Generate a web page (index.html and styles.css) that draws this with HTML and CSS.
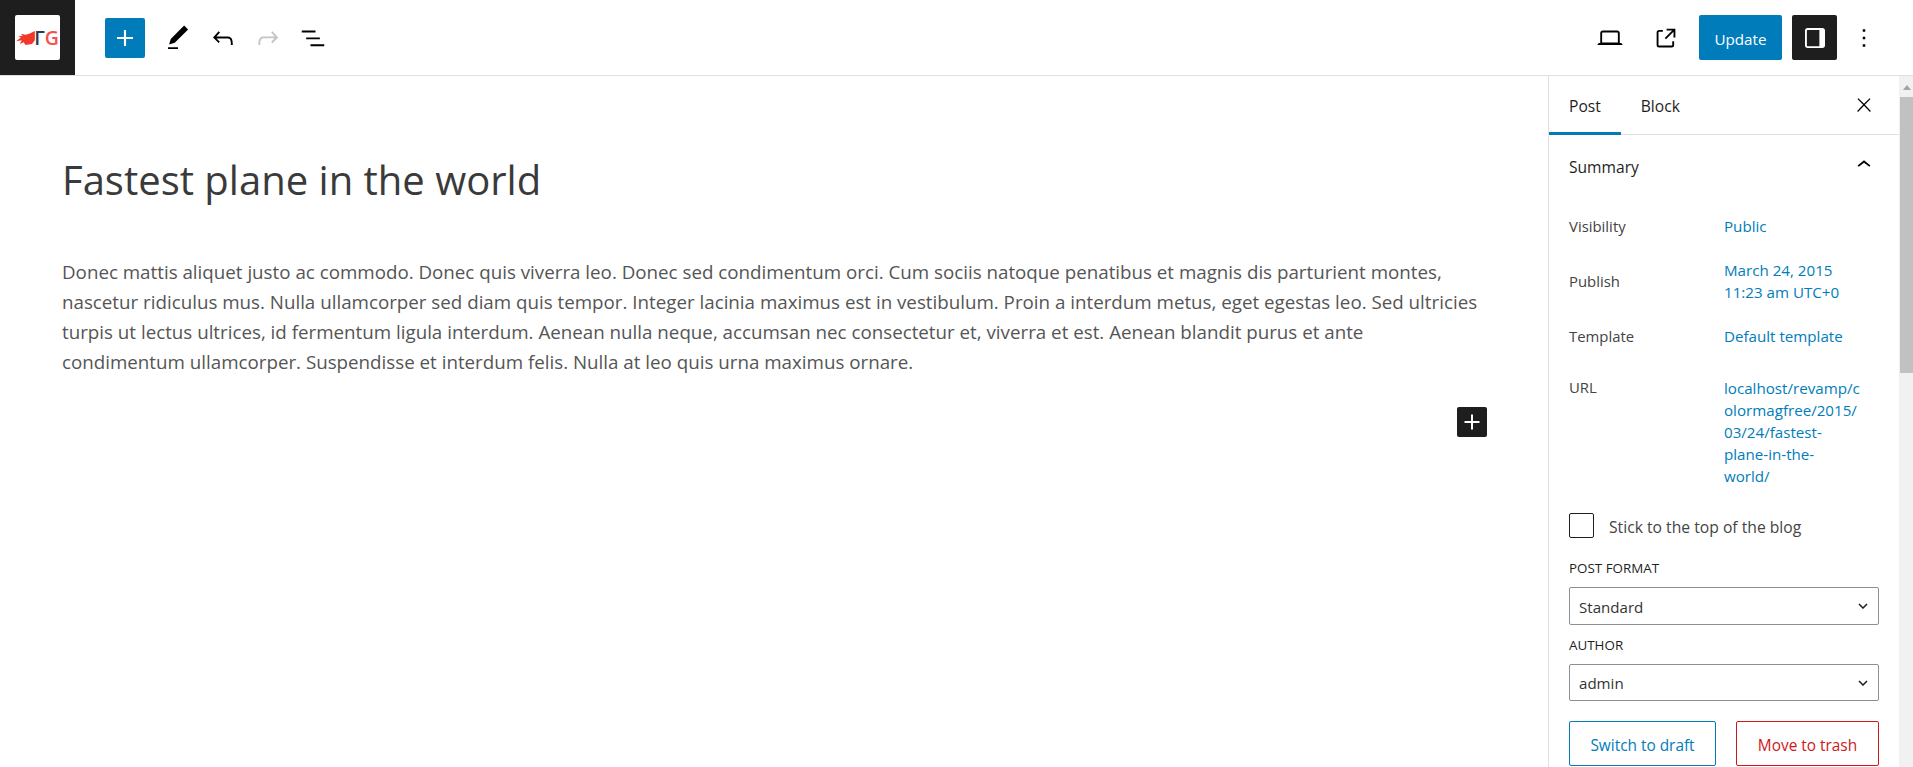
FILE: index.html
```html
<!DOCTYPE html>
<html lang="en">
<head>
    <meta charset="UTF-8">
    <meta name="viewport" content="width=device-width, initial-scale=1.0">
    <title>Edit Post</title>
    <link rel="stylesheet" href="styles.css">
</head>
<body>
    <!-- Top toolbar -->
    <header class="topbar">
        <div class="logo-box">
            <div class="logo">
                <svg class="logo-flame" viewBox="0 0 20 15"><path fill="#f0392b" d="M20 0V10L17 14 10 15 8 12 4 14 6 10 0 11 5 7 2 6 7 5 5 3 10 4 14 3z"/></svg>
                <span class="logo-t">Γ</span><span class="logo-g">G</span>
            </div>
        </div>
        <div class="tools-left">
            <button class="btn-add" type="button"><svg viewBox="0 0 24 24"><path d="M18 11.2h-5.2V6h-1.6v5.2H6v1.6h5.2V18h1.6v-5.2H18z"/></svg></button>
            <span class="tool"><svg viewBox="0 0 24 24"><path d="M20.1 5.1L16.9 2 6.2 12.7l-1.3 4.4 4.5-1.3L20.1 5.1zM4 20.8h8v-1.5H4v1.5z"/></svg></span>
            <span class="tool"><svg viewBox="0 0 24 24"><path d="M18.3 11.7c-.6-.6-1.4-.9-2.3-.9H6.7l2.9-3.3-1.1-1-4.5 5L8.5 16l1-1-2.7-2.7H16c.5 0 .9.2 1.3.5 1 1 1 3.4 1 4.5v.3h1.5v-.2c0-1.5 0-4.3-1.5-5.7z"/></svg></span>
            <span class="tool disabled"><svg viewBox="0 0 24 24"><path d="M15.6 6.5l-1.1 1 2.9 3.3H8c-.9 0-1.7.3-2.3.9-1.4 1.5-1.4 4.2-1.4 5.6v.2h1.5v-.3c0-1.1 0-3.5 1-4.5.3-.3.7-.5 1.3-.5h9.2L14.5 15l1.1 1.1 4.6-4.6-4.6-5z"/></svg></span>
            <span class="tool"><svg viewBox="0 0 24 24"><path d="M3 6h11v1.5H3V6zm3.5 5.5h11V13h-11v-1.5zM21 17H10v1.5h11V17z"/></svg></span>
        </div>
        <div class="tools-right">
            <span class="tool"><svg viewBox="0 0 24 24"><path d="M20.5 16h-.7V8c0-1.1-.9-2-2-2H6.2c-1.1 0-2 .9-2 2v8h-.7c-.8 0-1.5.7-1.5 1.5h20c0-.8-.7-1.5-1.5-1.5zM5.7 8c0-.3.2-.5.5-.5h11.6c.3 0 .5.2.5.5v7.6H5.7V8z"/></svg></span>
            <span class="tool"><svg viewBox="0 0 24 24"><path d="M19.5 4.5h-7V6h4.44l-5.97 5.97 1.06 1.06L18 7.06v4.44h1.5v-7Zm-13 1a2 2 0 0 0-2 2v10a2 2 0 0 0 2 2h10a2 2 0 0 0 2-2v-3H17v3a.5.5 0 0 1-.5.5h-10a.5.5 0 0 1-.5-.5v-10a.5.5 0 0 1 .5-.5h3V5.5h-3Z"/></svg></span>
            <button class="btn-update" type="button">Update</button>
            <button class="btn-panel" type="button"><svg viewBox="0 0 24 24"><path d="M18 4H6c-1.1 0-2 .9-2 2v12c0 1.1.9 2 2 2h12c1.1 0 2-.9 2-2V6c0-1.1-.9-2-2-2zM6 18.5c-.3 0-.5-.2-.5-.5V6c0-.3.2-.5.5-.5h9.5v13H6z"/></svg></button>
            <span class="tool more"><svg viewBox="0 0 24 24"><path d="M13 19h-2v-2h2v2zm0-6h-2v-2h2v2zm0-6h-2V5h2v2z"/></svg></span>
        </div>
    </header>

    <div class="workspace">
        <!-- Post content -->
        <main class="editor">
            <h1 class="post-title">Fastest plane in the world</h1>
            <p class="post-body">Donec mattis aliquet justo ac commodo. Donec quis viverra leo. Donec sed condimentum orci. Cum sociis natoque penatibus et magnis dis parturient montes, nascetur ridiculus mus. Nulla ullamcorper sed diam quis tempor. Integer lacinia maximus est in vestibulum. Proin a interdum metus, eget egestas leo. Sed ultricies turpis ut lectus ultrices, id fermentum ligula interdum. Aenean nulla neque, accumsan nec consectetur et, viverra et est. Aenean blandit purus et ante condimentum ullamcorper. Suspendisse et interdum felis. Nulla at leo quis urna maximus ornare.</p>
            <div class="appender-row">
                <button class="btn-appender" type="button"><svg viewBox="0 0 24 24"><path d="M18 11.2h-5.2V6h-1.6v5.2H6v1.6h5.2V18h1.6v-5.2H18z"/></svg></button>
            </div>
        </main>

        <!-- Settings sidebar -->
        <aside class="sidebar">
            <div class="tabs">
                <span class="tab active">Post</span>
                <span class="tab">Block</span>
                <svg class="tabs-close" viewBox="0 0 24 24"><path d="M13 11.8l6.1-6.3-1-1-6.1 6.2-6.1-6.2-1 1 6.1 6.3-6.5 6.7 1 1 6.5-6.6 6.5 6.6 1-1z"/></svg>
            </div>
            <div class="panel">
                <div class="panel-head">
                    <span>Summary</span>
                    <svg viewBox="0 0 24 24"><path d="M6.5 12.4L12 8l5.5 4.4-.9 1.2L12 10l-4.5 3.6-1-1.2z"/></svg>
                </div>
                <div class="row row-visibility"><span class="row-label">Visibility</span><a class="row-value">Public</a></div>
                <div class="row row-publish"><span class="row-label">Publish</span><a class="row-value">March 24, 2015<br>11:23 am UTC+0</a></div>
                <div class="row row-template"><span class="row-label">Template</span><a class="row-value">Default template</a></div>
                <div class="row row-url"><span class="row-label">URL</span><a class="row-value">localhost/revamp/c<br>olormagfree/2015/<br>03/24/fastest-<br>plane-in-the-<br>world/</a></div>
                <label class="stick"><span class="checkbox"></span><span class="stick-text">Stick to the top of the blog</span></label>
                <div class="field-label label-format">POST FORMAT</div>
                <div class="select select-format"><span>Standard</span><svg viewBox="0 0 10 6"><path d="M1 1l4 4 4-4" fill="none" stroke="#1e1e1e" stroke-width="1.5"/></svg></div>
                <div class="field-label label-author">AUTHOR</div>
                <div class="select select-author"><span>admin</span><svg viewBox="0 0 10 6"><path d="M1 1l4 4 4-4" fill="none" stroke="#1e1e1e" stroke-width="1.5"/></svg></div>
                <div class="actions">
                    <button class="btn-draft" type="button">Switch to draft</button>
                    <button class="btn-trash" type="button">Move to trash</button>
                </div>
            </div>
        </aside>

        <div class="scrollbar"><span class="scroll-arrow"></span><span class="scroll-thumb"></span></div>
    </div>
</body>
</html>
```

FILE: styles.css
```css
* {
    box-sizing: border-box;
}
html, body {
    height: 100%;
}
body {
    margin: 0;
    overflow: hidden;
    background: #fff;
    color: #1e1e1e;
    font-family: "Open Sans", sans-serif;
    font-size: 15px;
}
button {
    font-family: inherit;
    cursor: pointer;
}
svg {
    display: block;
    width: 30px;
    height: 30px;
}

/* top bar */
.topbar {
    display: flex;
    align-items: center;
    height: 76px;
    border-bottom: 1px solid #e0e0e0;
}
.logo-box {
    display: flex;
    align-items: center;
    justify-content: center;
    width: 75px;
    height: 75px;
    background: #1e1e1e;
}
.logo {
    display: flex;
    align-items: center;
    justify-content: center;
    width: 45px;
    height: 45px;
    background: #fff;
    border-radius: 2px;
    font-size: 19.5px;
    font-weight: 600;
    line-height: 1;
}
.logo .logo-flame {
    width: 19px;
    height: 14px;
    margin-right: -1px;
}
.logo-t {
    color: #2b3a55;
}
.logo-g {
    color: #f4524d;
}
.tools-left {
    display: flex;
    align-items: center;
    margin-left: 30px;
}
.tools-right {
    display: flex;
    align-items: center;
    gap: 10px;
    margin-left: auto;
}
.tool {
    display: flex;
    align-items: center;
    justify-content: center;
    width: 45px;
    height: 45px;
}
.tools-right .tool {
    width: 46px;
}
.tool.disabled svg {
    fill: #c4c4c4;
}
.btn-add {
    display: flex;
    align-items: center;
    justify-content: center;
    width: 40px;
    height: 40px;
    margin-right: 10px;
    padding: 0;
    border: 0;
    border-radius: 2px;
    background: #007cba;
}
.btn-add svg {
    width: 32px;
    height: 32px;
    fill: #fff;
}
.btn-update {
    width: 83px;
    height: 45px;
    padding: 2px 0 0;
    border: 0;
    border-radius: 2px;
    background: #007cba;
    color: #fff;
    font-size: 15.2px;
}
.btn-panel {
    display: flex;
    align-items: center;
    justify-content: center;
    width: 45px;
    height: 45px;
    padding: 0;
    border: 0;
    border-radius: 2px;
    background: #1e1e1e;
}
.btn-panel svg {
    fill: #fff;
}
.more {
    margin-left: -6px;
    margin-right: 26px;
}

/* main area */
.workspace {
    display: flex;
    height: 691px;
}
.editor {
    flex: 1;
    min-width: 0;
    padding: 0 61px 0 62px;
}
.post-title {
    margin: 78px 0 0;
    color: #3a3a3a;
    font-size: 40px;
    font-weight: 400;
    line-height: 52px;
}
.post-body {
    margin: 51px 0 0;
    color: #555;
    font-size: 18.75px;
    line-height: 30px;
}
.appender-row {
    display: flex;
    justify-content: flex-end;
    margin-top: 30px;
}
.btn-appender {
    display: flex;
    align-items: center;
    justify-content: center;
    width: 30px;
    height: 30px;
    padding: 0;
    border: 0;
    border-radius: 2px;
    background: #1e1e1e;
}
.btn-appender svg {
    flex: none;
    fill: #fff;
}

/* sidebar */
.sidebar {
    flex: none;
    width: 351px;
    border-left: 1px solid #e0e0e0;
    overflow: hidden;
}
.tabs {
    display: flex;
    align-items: center;
    height: 59px;
    border-bottom: 1px solid #e0e0e0;
}
.tab {
    display: flex;
    align-items: center;
    height: 59px;
    padding: 4px 20px 0;
    color: #1e1e1e;
    font-size: 15.6px;
    border-bottom: 3px solid transparent;
}
.tab.active {
    border-bottom-color: #007cba;
}
.tabs .tabs-close {
    width: 22px;
    height: 22px;
    margin-left: auto;
    margin-right: 24px;
}
.panel {
    padding: 0 20px;
}
.panel-head {
    display: flex;
    align-items: center;
    justify-content: space-between;
    height: 64px;
    font-size: 15.6px;
    font-weight: 500;
}
.panel-head svg {
    width: 28px;
    height: 28px;
    margin-right: 1px;
    margin-top: -4px;
}
.row {
    display: flex;
    align-items: center;
}
.row-label {
    flex: none;
    width: 155px;
    color: #444;
    font-size: 14.9px;
}
.row-value {
    flex: 1;
    color: #007cba;
    font-size: 15.15px;
    line-height: 22px;
}
.row-visibility {
    height: 22px;
    margin-top: 16px;
}
.row-publish {
    margin-top: 22px;
}
.row-template {
    margin-top: 22px;
}
.row-url {
    align-items: flex-start;
    margin-top: 30px;
}
.stick {
    display: flex;
    align-items: center;
    margin-top: 26px;
    color: #444;
    font-size: 15.7px;
}
.stick-text {
    padding-top: 2px;
}
.checkbox {
    width: 25px;
    height: 25px;
    margin-right: 15px;
    border: 1px solid #1e1e1e;
    border-radius: 2px;
}
.field-label {
    font-size: 13.4px;
    line-height: 16px;
    color: #1e1e1e;
}
.label-format {
    margin-top: 22px;
}
.label-author {
    margin-top: 12px;
}
.select {
    display: flex;
    align-items: center;
    justify-content: space-between;
    padding: 0 10px 0 9px;
    border: 1px solid #8c8f94;
    border-radius: 2px;
    color: #333;
    font-size: 15.1px;
}
.select span {
    padding-top: 1px;
}
.select svg {
    width: 10px;
    height: 6px;
}
.select-format {
    height: 38px;
    margin-top: 11px;
}
.select-author {
    height: 37px;
    margin-top: 11px;
}
.actions {
    display: flex;
    justify-content: space-between;
    margin-top: 20px;
}
.actions button {
    height: 45px;
    padding: 4px 0 0;
    border-radius: 2px;
    background: #fff;
    font-size: 15.4px;
}
.btn-draft {
    width: 147px;
    border: 1px solid #007cba;
    color: #007cba;
}
.btn-trash {
    width: 143px;
    border: 1px solid #cc1818;
    color: #cc1818;
}

/* scrollbar */
.scrollbar {
    flex: none;
    display: flex;
    flex-direction: column;
    align-items: flex-end;
    width: 14px;
    background: #f1f1f1;
}
.scroll-arrow {
    width: 0;
    height: 0;
    margin: 9px 2px 7px 0;
    border-left: 4px solid transparent;
    border-right: 4px solid transparent;
    border-bottom: 5px solid #a3a3a3;
}
.scroll-thumb {
    width: 13px;
    height: 276px;
    background: #c1c1c1;
}
```
